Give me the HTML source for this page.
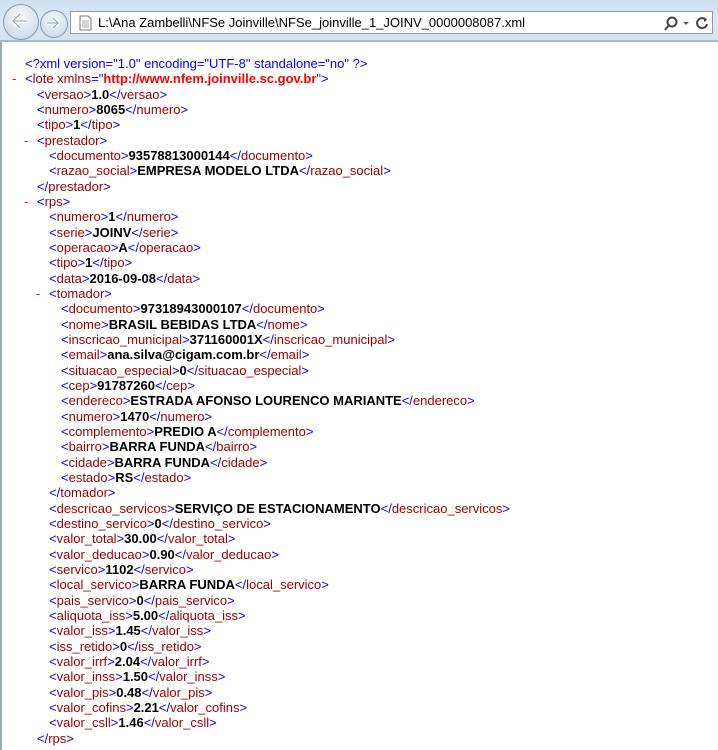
<!DOCTYPE html>
<html><head><meta charset="utf-8"><style>
body{margin:0;width:718px;height:750px;overflow:hidden;background:#fff;font-family:"Liberation Sans",sans-serif;}
#bar{position:absolute;left:0;top:0;width:718px;height:40px;background:linear-gradient(#cfe0f1,#dbe8f6 50%,#d3e2f2);border-bottom:2px solid #a9b6c4;}
#addr{position:absolute;left:70px;top:11px;width:643px;height:23px;background:#fff;border:1px solid #8a9bb0;box-sizing:border-box;font-size:13px;line-height:21px;}
#addr .t{position:absolute;left:27px;top:0;color:#000;}
.circ{position:absolute;border-radius:50%;border:1px solid #8499b3;background:radial-gradient(circle at 50% 35%,#f4f8fc,#c4d3e4);}
#content{position:absolute;left:0;top:42px;width:716px;height:708px;border-left:2px solid #9fa9b4;}
.l{position:absolute;font-size:13px;line-height:15px;white-space:pre;color:#0000ff;}
.n{color:#990000}.b{color:#000;font-weight:bold}.d{color:#ff0000;position:absolute;}
.v{color:#ff0000;font-weight:bold}
</style></head><body>
<div id="bar">
<div class="circ" style="left:3px;top:4px;width:34px;height:34px;"></div>
<svg style="position:absolute;left:8px;top:10px" width="24" height="22"><path d="M19 11H6M12 4l-7 7 7 7" stroke="#fff" stroke-width="4" fill="none"/><path d="M19 11H6M12 4l-7 7 7 7" stroke="#8a9bb0" stroke-width="1" fill="none"/></svg>
<div class="circ" style="left:40px;top:10px;width:26px;height:26px;"></div>
<svg style="position:absolute;left:44px;top:14px" width="18" height="18"><path d="M3 9h11M9 4l5 5-5 5" stroke="#fff" stroke-width="3" fill="none"/><path d="M3 9h11M9 4l5 5-5 5" stroke="#8a9bb0" stroke-width="1" fill="none"/></svg>
<div id="addr"><svg style="position:absolute;left:8px;top:3px" width="13" height="16"><path d="M1 1h8l3 3v11H1z" fill="#fff" stroke="#777"/><path d="M3 6h7M3 8h7M3 10h7M3 12h7" stroke="#aaa"/></svg><span class="t">L:\Ana Zambelli\NFSe Joinville\NFSe_joinville_1_JOINV_0000008087.xml</span>
<svg style="position:absolute;left:592px;top:3px" width="48" height="16"><circle cx="9" cy="7" r="4.5" stroke="#444" stroke-width="2" fill="none"/><path d="M6 10l-4 5" stroke="#444" stroke-width="2"/><path d="M20 7h6l-3 3z" fill="#555"/><path d="M43 5a5 5 0 1 0 1 4" stroke="#444" stroke-width="2" fill="none"/><path d="M41 2l3 3-3 2z" fill="#444"/></svg></div>
</div>
<div id="content"></div>
<div id="lines"></div>
<script>
var L=[
[0,'x','<?xml version="1.0" encoding="UTF-8" standalone="no" ?>'],
[0,'lote',null,1],
[1,'versao','1.0'],[1,'numero','8065'],[1,'tipo','1'],
[1,'prestador',null,1],[2,'documento','93578813000144'],[2,'razao_social','EMPRESA MODELO LTDA'],[1,'/prestador'],
[1,'rps',null,1],[2,'numero','1'],[2,'serie','JOINV'],[2,'operacao','A'],[2,'tipo','1'],[2,'data','2016-09-08'],
[2,'tomador',null,1],[3,'documento','97318943000107'],[3,'nome','BRASIL BEBIDAS LTDA'],[3,'inscricao_municipal','371160001X'],[3,'email','ana.silva@cigam.com.br'],[3,'situacao_especial','0'],[3,'cep','91787260'],[3,'endereco','ESTRADA AFONSO LOURENCO MARIANTE'],[3,'numero','1470'],[3,'complemento','PREDIO A'],[3,'bairro','BARRA FUNDA'],[3,'cidade','BARRA FUNDA'],[3,'estado','RS'],[2,'/tomador'],
[2,'descricao_servicos','SERVIÇO DE ESTACIONAMENTO'],[2,'destino_servico','0'],[2,'valor_total','30.00'],[2,'valor_deducao','0.90'],[2,'servico','1102'],[2,'local_servico','BARRA FUNDA'],[2,'pais_servico','0'],[2,'aliquota_iss','5.00'],[2,'valor_iss','1.45'],[2,'iss_retido','0'],[2,'valor_irrf','2.04'],[2,'valor_inss','1.50'],[2,'valor_pis','0.48'],[2,'valor_cofins','2.21'],[2,'valor_csll','1.46'],[1,'/rps']
];
var h='';
L.forEach(function(r,i){
 var y=56+i*15.33, x=25+r[0]*12, s;
 if(r[1]=='x'){s=r[2].replace(/&/g,'&amp;').replace(/</g,'&lt;');}
 else if(r[1]=='lote'){s='&lt;<span class="n">lote xmlns</span>="<span class="v">http://www.nfem.joinville.sc.gov.br</span>"&gt;';}
 else if(r[1][0]=='/'){s='&lt;/<span class="n">'+r[1].slice(1)+'</span>&gt;';}
 else if(r[2]==null){s='&lt;<span class="n">'+r[1]+'</span>&gt;';}
 else {s='&lt;<span class="n">'+r[1]+'</span>&gt;<span class="b">'+r[2]+'</span>&lt;/<span class="n">'+r[1]+'</span>&gt;';}
 if(r[3]) h+='<div class="l d" style="left:'+(x-13)+'px;top:'+y+'px">-</div>';
 h+='<div class="l" style="left:'+x+'px;top:'+y+'px">'+s+'</div>';
});
document.getElementById('lines').innerHTML=h;
</script>
</body></html>
